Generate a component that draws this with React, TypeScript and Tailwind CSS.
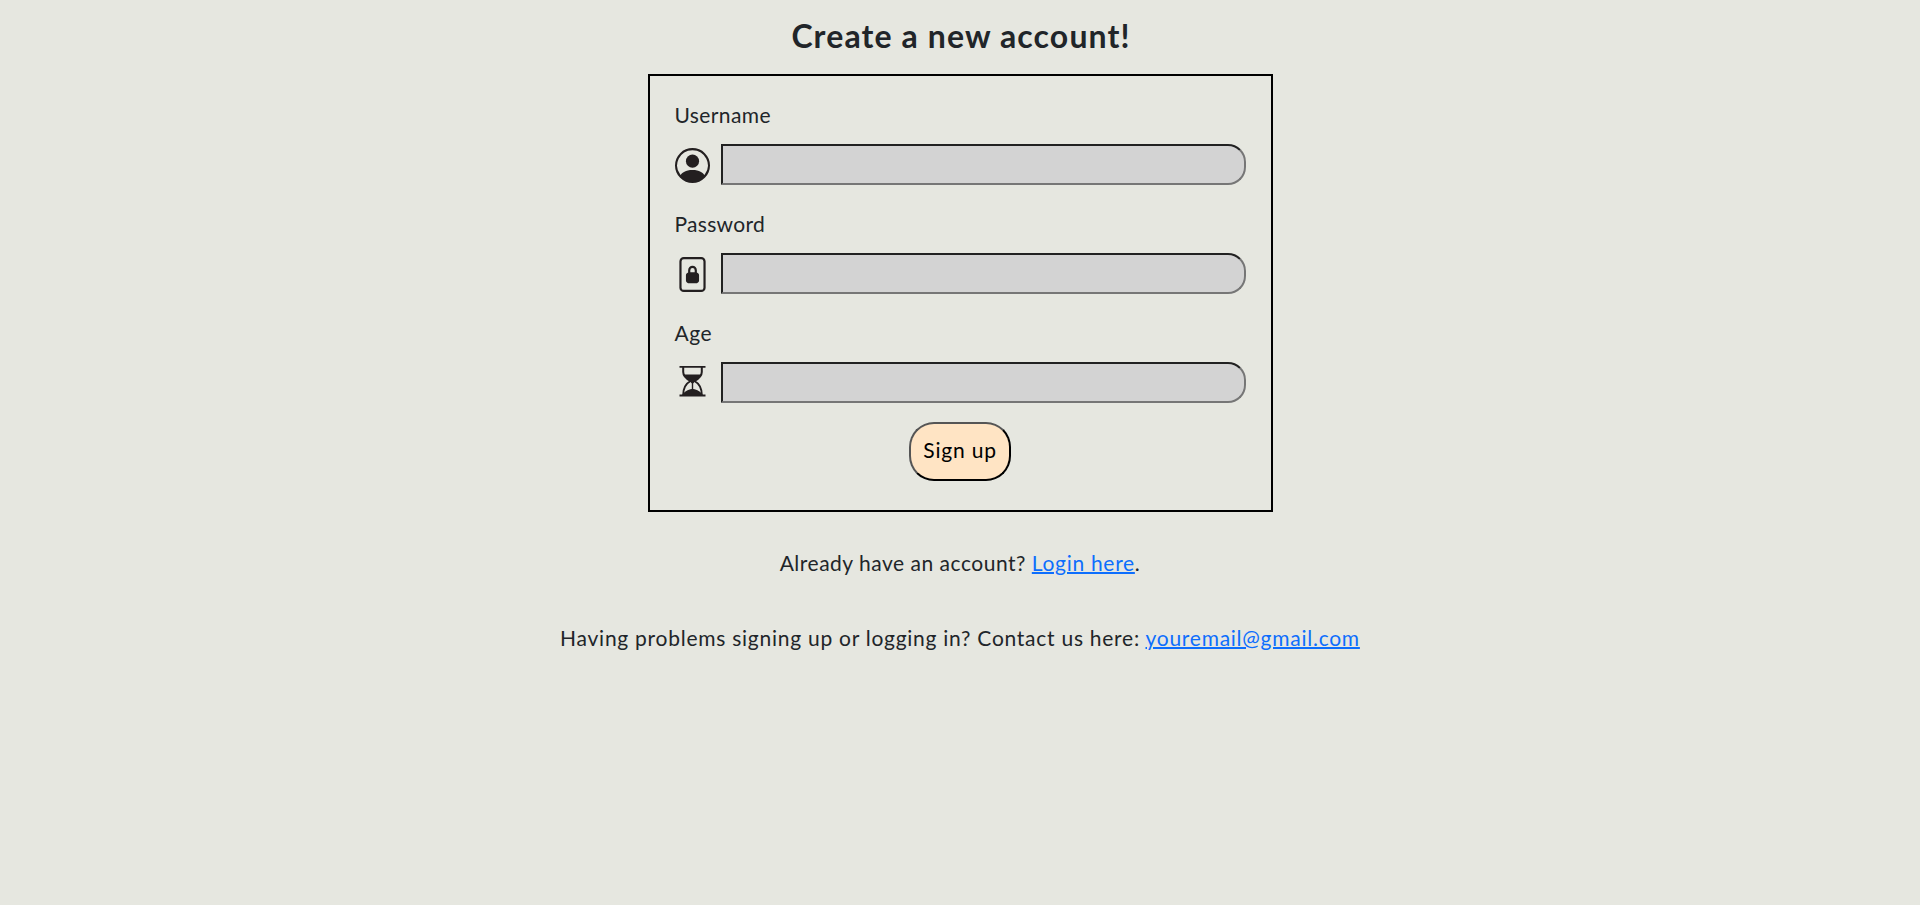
import { BsPersonCircle, BsFileLock2 } from "react-icons/bs";
import type { ReactNode } from "react";

function Hourglass() {
  return (
    <svg width="35" height="35" viewBox="0 3 35 35" fill="none" stroke="#231f20">
      <path d="M4.500 3.800H30.500M4.500 32.500H30.500" strokeWidth="1.900" />
      <path d="M8.200 4V9C8.200 13 11 15.500 15.500 18C11 20.500 8.200 24 8.200 32M26.800 4V9C26.800 13 24 15.500 19.500 18C24 20.500 26.800 24 26.800 32" strokeWidth="2" />
      <path d="M8.700 11.500H26.300C25 14.500 21.500 16.500 20.300 18L18.200 20.500V26C22 26.500 26 28.500 27.500 32H7.500C9 28.500 13 26.500 16.800 26V20.500L14.700 18C13.500 16.500 10 14.500 8.700 11.500Z" fill="#231f20" stroke="none" />
    </svg>
  );
}

function Field({ label, type, icon }: { label: ReactNode; type: string; icon: ReactNode }) {
  return (
    <label className="flex h-[109px] flex-col">
      <span className="h-[44px] leading-[30px]">{label}</span>
      <span className="flex">
        <span className="flex w-[46px] pt-1 text-[35px] text-[#231f20]">{icon}</span>
        <input
          type={type}
          className="h-[41px] min-w-0 flex-1 rounded-r-[18px] border-2 border-t-[#212121] border-r-[#767676] border-b-[#767676] border-l-[#212121] bg-[#d3d3d3] px-2 outline-none"
        />
      </span>
    </label>
  );
}

export default function App() {
  return (
    <main className="flex min-h-screen flex-col items-center bg-[#e6e7e0] font-['Lato',sans-serif] text-[21px] leading-[30px] tracking-[0.8px] text-[#212529]">
      <h1 className="h-[74px] pt-[17px] pl-[2px] text-[32px] leading-[38px] font-bold tracking-[1.12px]">Create a new account!</h1>
      <form className="flex h-[438px] w-[625px] flex-col border-2 border-black px-[25px] pt-[24px]">
        <Field label={<span className="tracking-[0.4px]">Username</span>} type="text" icon={<BsPersonCircle />} />
        <Field label={<span className="tracking-[0.3px]">Password</span>} type="password" icon={<BsFileLock2 />} />
        <Field label={<span className="tracking-[0.5px]">Age</span>} type="text" icon={<Hourglass />} />
        <button
          type="button"
          className="-mt-[5px] h-[59px] w-[102px] shrink-0 self-center rounded-[25px] border-2 border-t-[#555] border-r-black border-b-black border-l-[#555] bg-[#ffe4c4] pb-[3px] text-black"
        >
          Sign up
        </button>
      </form>
      <p className="mt-[36px] tracking-[0.51px]">
        Already have an account? <a href="#login" className="tracking-[0.7px] text-[#0d6efd] underline decoration-2">Login here</a>.
      </p>
      <p className="mt-[45px] tracking-[0.74px]">
        Having problems signing up or logging in? Contact us here:{" "}
        <a href="#contact" className="text-[#0d6efd] underline decoration-2">youremail@gmail.com</a>
      </p>
    </main>
  );
}
